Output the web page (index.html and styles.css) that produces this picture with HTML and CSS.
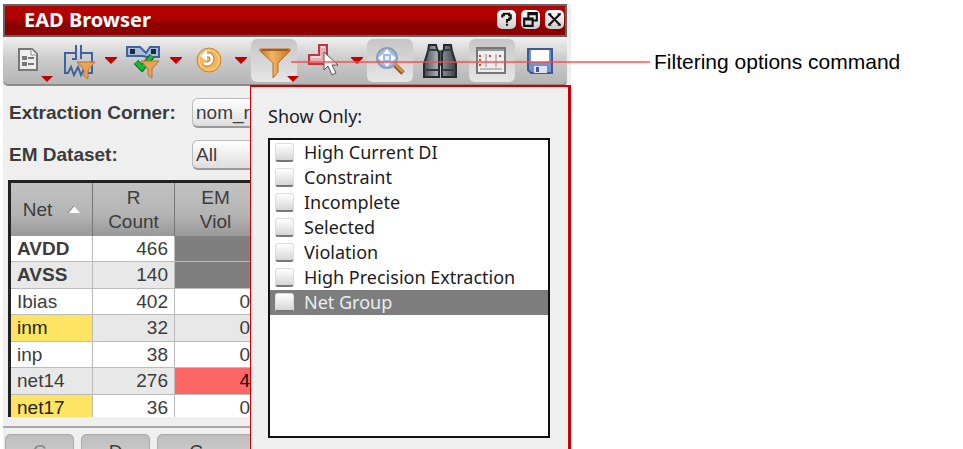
FILE: index.html
```html
<!DOCTYPE html>
<html lang="en">
<head>
<meta charset="utf-8">
<title>EAD Browser</title>
<link rel="stylesheet" href="styles.css">
</head>
<body>
<main class="page">
  <section class="panel">
    <header class="titlebar">
      <h1>EAD Browser</h1>
      <div class="window-buttons">
        <button type="button" aria-label="Help"><svg viewBox="0 0 18 18"><path d="M5 7V5h1.500V3.500h5V5H13v3h-1.500v1.500h-2V12M9.500 13v2" fill="none" stroke="#111" stroke-width="2"/></svg></button>
        <button type="button" aria-label="Restore"><svg viewBox="0 0 18 18"><path d="M7 7V3h8v7h-3M7 4h8M3 8h8v7H3zM3 9h8" fill="none" stroke="#111" stroke-width="2"/></svg></button>
        <button type="button" aria-label="Close"><svg viewBox="0 0 18 18"><path d="M4 4l10 10M14 4L4 14M3 4h3M12 4h3M3 14h3M12 14h3" fill="none" stroke="#111" stroke-width="2"/></svg></button>
      </div>
    </header>

    <div class="toolbar">
      <div class="tool-group">
        <button type="button" class="tool" aria-label="Options">
          <svg viewBox="0 0 46 42"><path d="M14 9h13l5 5v16H14z" fill="#eee" stroke="#777" stroke-width="2"/><path d="M26 9v6h6" fill="#fff" stroke="#888"/><path d="M17 16h5v4h-5zM17 22h5v4h-5zM23 17h6v2h-6zM23 23h6v2h-6z" fill="#777"/><path d="M36 36h12l-6 6z" fill="#c30000"/></svg>
        </button>
      </div>
      <div class="tool-group">
        <div class="split">
          <button type="button" class="tool" aria-label="Filter parasitics">
            <svg viewBox="0 0 46 42"><path d="M20 5v8M25 5v8M20 12v7h-4M25 12v7M20 13H9v20h3l3-6 3 8 4-8 3 8 4-8 3 6h4V13H25" fill="none" stroke="#40639c" stroke-width="2"/><path d="M21 22h18l-7 8v9l-4-3v-6z" fill="#e8a358" stroke="#b8742f"/></svg>
          </button>
          <button type="button" class="arrow" aria-label="Parasitics menu"><svg viewBox="0 0 12 7"><path d="M0 0h12v1L6 7 0 1z" fill="#c30000"/></svg></button>
        </div>
        <div class="split">
          <button type="button" class="tool" aria-label="Filter nets">
            <svg viewBox="0 0 46 42"><path d="M6 7h13l6 6 4-6h9v10H26l-4-1H6z" fill="#a9bdd6" stroke="#40639c" stroke-width="2"/><path d="M9 9h5v5H9zM30 9h5v5h-5z" fill="#172744"/><path d="M15 22l6 6L31 16" fill="none" stroke="#086018" stroke-width="6"/><path d="M15 22l6 6L31 16" fill="none" stroke="#14bc38" stroke-width="4"/><path d="M20 21h18l-7 8v9l-4-3v-6z" fill="#e8a358" stroke="#b8742f"/></svg>
          </button>
          <button type="button" class="arrow" aria-label="Nets menu"><svg viewBox="0 0 12 7"><path d="M0 0h12v1L6 7 0 1z" fill="#c30000"/></svg></button>
        </div>
        <div class="split">
          <button type="button" class="tool" aria-label="Refresh">
            <svg viewBox="0 0 46 42"><circle cx="23" cy="20" r="12" fill="#f6b653" stroke="#d58032"/><circle cx="23" cy="20" r="10" fill="none" stroke="#ffda91"/><path d="M20 15h4a5 5 0 1 1-6 8" fill="none" stroke="#b77c38" stroke-width="5"/><path d="M20 15h4a5 5 0 1 1-6 8" fill="none" stroke="#fff" stroke-width="3"/><path d="M14 16l7-6v11z" fill="#fff"/></svg>
          </button>
          <button type="button" class="arrow" aria-label="Refresh menu"><svg viewBox="0 0 12 7"><path d="M0 0h12v1L6 7 0 1z" fill="#c30000"/></svg></button>
        </div>
        <button type="button" class="tool active" aria-label="Filtering options">
          <svg viewBox="0 0 46 42"><defs><linearGradient id="amber"><stop offset="0" stop-color="#c8771f"/><stop offset=".4" stop-color="#f3b468"/><stop offset="1" stop-color="#c8771f"/></linearGradient></defs><path d="M9 9h30v2L27 23v9l-5 6V23L9 11z" fill="url(#amber)" stroke="#b96d22"/><path d="M11 10h26" stroke="#a35d1c" stroke-width="2"/><path d="M36 36h12l-6 6z" fill="#c30000"/></svg>
        </button>
      </div>
      <div class="tool-group">
        <div class="split">
          <button type="button" class="tool" aria-label="Select shape">
            <svg viewBox="0 0 46 42"><path d="M17 5h8v19H7v-9h10z" fill="#e7adb0" stroke="#b83a41" stroke-width="2"/><path d="M19 7h4M9 17h10" stroke="#f8dcdd" stroke-width="2"/><path d="M22 12v18l4-4 4 9 4-2-4-8h6z" fill="#fff" stroke="#555"/></svg>
          </button>
          <button type="button" class="arrow" aria-label="Selection menu"><svg viewBox="0 0 12 7"><path d="M0 0h12v1L6 7 0 1z" fill="#c30000"/></svg></button>
        </div>
        <button type="button" class="tool active" aria-label="Zoom">
          <svg viewBox="0 0 46 42"><path d="M27 24l9 9" stroke="#965118" stroke-width="5"/><path d="M28 24l8 8" stroke="#dc8d3c" stroke-width="3"/><circle cx="20" cy="18" r="10" fill="#9ebce5" stroke="#8c9db8" stroke-width="2"/><path d="M20 9l4 5h-8zM20 27l4-5h-8zM11 18l5-4v8zM29 18l-5-4v8z" fill="#fff"/><path d="M18 16h4v4h-4z" fill="#e9f2ff"/></svg>
        </button>
      </div>
      <button type="button" class="tool" aria-label="Find">
        <svg viewBox="0 0 46 42"><defs><linearGradient id="steel"><stop offset="0" stop-color="#444b50"/><stop offset=".4" stop-color="#a4adb4"/><stop offset="1" stop-color="#394045"/></linearGradient></defs><path d="M18 11h8v14h-8z" fill="#555d64" stroke="#222"/><path d="M11 5h7l1 4 2 4v24H6V24l4-13zM26 5h7l1 6 4 13v13H24V13l2-4z" fill="url(#steel)" stroke="#25292c" stroke-width="2"/><path d="M6 30h15M24 30h14M10 10h9M25 10h9" stroke="#343a3f" stroke-width="2"/></svg>
      </button>
      <button type="button" class="tool active" aria-label="Columns">
        <svg viewBox="0 0 46 42"><path d="M8 8h28v25H8z" fill="#eee" stroke="#777" stroke-width="2"/><path d="M9 10h26" stroke="#999" stroke-width="2"/><path d="M17 14v13M27 14v13M11 29h22" stroke="#888"/><path d="M10 15h2v2h-2zM10 19h2v2h-2zM10 24h2v2h-2zM20 15h2v2h-2zM30 15h2v2h-2z" fill="#c84444"/></svg>
      </button>
      <button type="button" class="tool save" aria-label="Save">
        <svg viewBox="3 0 40 42"><path d="M11 9h24v24H14l-3-3z" fill="#7292cc" stroke="#3e5996" stroke-width="2"/><path d="M14 10h18v12H14z" fill="#fff"/><path d="M17 26h13v7H17z" fill="#dde3ed"/><path d="M19 27h3v5h-3z" fill="#3e5996"/></svg>
      </button>
    </div>

    <div class="workspace">
      <form class="fields">
        <label for="corner">Extraction Corner:</label>
        <select id="corner"><option>nom_r</option></select>
        <label for="dataset">EM Dataset:</label>
        <select id="dataset"><option>All</option></select>
      </form>
      <div class="table-frame">
        <table>
          <thead>
            <tr><th><span class="sort">Net <svg viewBox="0 0 12 7"><path d="M0 7l6-7 6 7z" fill="#fff"/><path d="M0 7l6-7" stroke="#777"/></svg></span></th><th>R<br>Count</th><th>EM<br>Viol</th></tr>
          </thead>
          <tbody>
            <tr><td class="strong">AVDD</td><td>466</td><td class="empty"></td></tr>
            <tr><td class="strong">AVSS</td><td>140</td><td class="empty"></td></tr>
            <tr><td>Ibias</td><td>402</td><td>0</td></tr>
            <tr><td class="marked">inm</td><td>32</td><td>0</td></tr>
            <tr><td>inp</td><td>38</td><td>0</td></tr>
            <tr><td>net14</td><td>276</td><td class="violation">4</td></tr>
            <tr><td class="marked">net17</td><td>36</td><td>0</td></tr>
          </tbody>
        </table>
      </div>
      <footer class="actions">
        <button type="button" class="muted">C</button>
        <button type="button">D</button>
        <button type="button" class="wide">C</button>
      </footer>
    </div>

    <aside class="popup">
      <h2>Show Only:</h2>
      <div class="options">
        <label><input type="checkbox">High Current DI</label>
        <label><input type="checkbox">Constraint</label>
        <label><input type="checkbox">Incomplete</label>
        <label><input type="checkbox">Selected</label>
        <label><input type="checkbox">Violation</label>
        <label><input type="checkbox">High Precision Extraction</label>
        <label class="current"><input type="checkbox">Net Group</label>
      </div>
    </aside>
  </section>
  <p class="callout">Filtering options command</p>
</main>
</body>
</html>
```

FILE: styles.css
```css
* {
  box-sizing: border-box;
}

body {
  margin: 0;
  background: #fff;
  color: #3c3c3c;
  font: 19px/24px "Liberation Sans", Arial, sans-serif;
}

button,
select {
  margin: 0;
  padding: 0;
  border: 0;
  background: none;
  color: inherit;
  font: inherit;
}

svg {
  display: block;
}

.page {
  display: flex;
  align-items: flex-start;
  height: 100vh;
  padding: 4px 0 0 3px;
  overflow: hidden;
}

.panel {
  position: relative;
  display: flex;
  flex: 0 1 568px;
  flex-direction: column;
  height: 100%;
  overflow: hidden;
  background: #efefef;
}

.titlebar {
  display: flex;
  flex: none;
  align-items: center;
  justify-content: space-between;
  height: 33px;
  margin-right: 4px;
  padding: 0 1px 2px 19px;
  border: 2px solid #646464;
  background: linear-gradient(#b40000, #b00000 45%, #8c0000 60%, #900000);
  color: #fff;
}

.titlebar h1 {
  margin: 0;
  font: bold 20px/24px "Noto Sans", "Open Sans", sans-serif;
}

.window-buttons {
  display: flex;
  gap: 5px;
}

.window-buttons button {
  width: 19px;
  height: 19px;
  border-radius: 5px;
  background: linear-gradient(#fff, #ccc);
}

.toolbar {
  display: flex;
  flex: none;
  gap: 5px;
  align-items: center;
  height: 49px;
  margin-right: 4px;
  padding: 0 2px;
  border-bottom: 2px solid #8b8b8b;
  border-radius: 0 0 5px 5px;
  background: linear-gradient(#f0f0f0, #c9c9c9 50%, #b5b5b5);
}

.tool-group {
  display: flex;
  gap: 1px;
}

.split {
  display: flex;
}

.tool {
  flex: none;
  width: 46px;
  height: 43px;
  border-radius: 6px;
}

.tool svg {
  width: 46px;
  height: 42px;
  overflow: visible;
}

.tool.active {
  background: linear-gradient(#c6c6c6, #e6e6e6);
}

.save {
  width: 40px;
}

.save svg {
  width: 40px;
}

.arrow {
  display: grid;
  place-items: center;
  width: 18px;
}

.arrow svg {
  width: 12px;
  height: 7px;
}

.workspace {
  display: flex;
  flex: 1;
  flex-direction: column;
}

.fields {
  display: grid;
  grid-template-columns: 183px 120px;
  row-gap: 12px;
  align-items: center;
  padding: 12px 0 10px 6px;
}

.fields label {
  font-weight: bold;
}

.fields select {
  height: 30px;
  padding: 0 3px;
  border: 1px solid #bbb;
  border-bottom: 2px solid #999;
  border-radius: 6px;
  appearance: none;
  background: linear-gradient(#fff, #dedede);
}

.table-frame {
  flex: none;
  width: 260px;
  height: 237px;
  margin-left: 5px;
  overflow: hidden;
  border: 3px solid #222;
  border-bottom: 0;
}

table {
  width: 246px;
  border-spacing: 0;
  table-layout: fixed;
}

th {
  height: 53px;
  padding: 0;
  border-right: 1px solid #777;
  background: linear-gradient(#c2c2c2, #b4b4b4 60%, #989898);
  font-weight: normal;
}

.sort {
  display: flex;
  gap: 16px;
  align-items: center;
  justify-content: center;
}

.sort svg {
  width: 12px;
  height: 7px;
}

td {
  height: 26px;
  padding: 0 6px;
  border-right: 1px solid #bbb;
  border-bottom: 1px solid #bbb;
  background: #fff;
  text-align: right;
}

tr:nth-child(even) td {
  height: 27px;
  background: #e8e8e8;
}

td:first-child {
  text-align: left;
}

td.strong {
  font-weight: bold;
}

td.marked,
tr:nth-child(even) td.marked {
  background: #ffe362;
  color: #222;
}

td.empty,
tr:nth-child(even) td.empty {
  background: #7f7f7f;
}

td.violation,
tr:nth-child(even) td.violation {
  background: #ff6666;
  color: #111;
}

.actions {
  display: flex;
  gap: 7px;
  margin-top: 9px;
  padding: 6px 2px 0;
  border-top: 2px solid #a8a8a8;
}

.actions button {
  flex: none;
  width: 69px;
  height: 36px;
  border: 1px solid #aaa;
  border-radius: 5px;
  background: linear-gradient(#bdbdbd, #d8d8d8);
}

.actions .wide {
  width: 104px;
  padding-right: 26px;
}

.actions .muted {
  color: #888;
}

.popup {
  position: absolute;
  top: 81px;
  right: 0;
  bottom: 0;
  left: 247px;
  padding: 17px 18px 0 17px;
  border: solid #cc0000;
  border-width: 2px 3px 0 1px;
  background: #efefef;
  color: #1c1c1c;
  font: 18px/25px "Noto Sans", "Open Sans", sans-serif;
}

.popup h2 {
  margin: 0 0 9px;
  font: inherit;
}

.options {
  height: 300px;
  border: 2px solid #111;
  background: #fff;
}

.options label {
  display: flex;
  gap: 10px;
  align-items: center;
  height: 25px;
  padding-left: 5px;
}

.options input {
  width: 19px;
  height: 19px;
  margin: 0;
  border: 1px solid #ddd;
  border-bottom: 2px solid #777;
  border-radius: 3px;
  appearance: none;
  background: linear-gradient(#fff, #d6d6d6);
}

.options .current {
  background: #7d7d7d;
  color: #e8eef0;
}

.callout {
  position: relative;
  flex: 1;
  margin: 46px 0 0;
  padding-left: 83px;
  color: #000;
  font-size: 21px;
  white-space: nowrap;
}

.callout::before {
  position: absolute;
  top: 11px;
  left: -280px;
  width: 359px;
  height: 2px;
  background: #ff4646b3;
  content: "";
}
```
